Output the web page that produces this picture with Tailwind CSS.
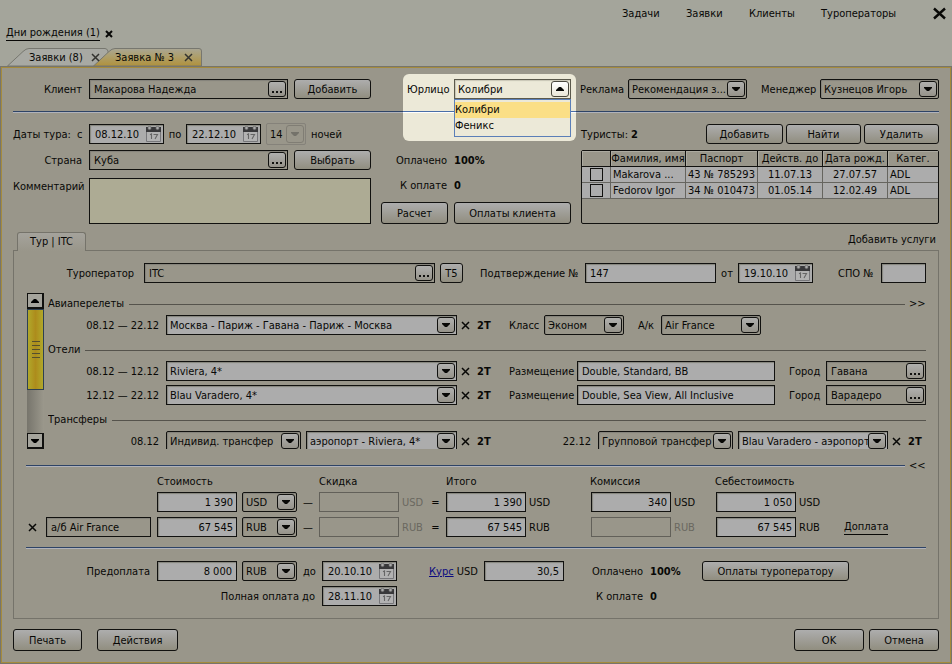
<!DOCTYPE html>
<html lang="ru">
<head>
<meta charset="utf-8">
<title>Заявка № 3</title>
<script src="https://cdn.jsdelivr.net/npm/@tailwindcss/browser@4"></script>
</head>
<body class="min-h-screen bg-[#a4a59b] font-['DejaVu_Sans_Condensed','DejaVu_Sans',sans-serif] text-[11px] leading-4 text-[#080806] whitespace-nowrap">
<svg class="hidden">
  <symbol id="down" viewBox="0 0 8 4"><path d="M0 0h8v1L5 4H3L0 1z"/></symbol>
  <symbol id="up" viewBox="0 0 8 4"><path d="M0 4h8V3L5 0H3L0 3z"/></symbol>
  <symbol id="cross" viewBox="0 0 9 9"><path d="M1 1l7 7M8 1l-7 7" fill="none" stroke="currentColor" stroke-width="1.500"/></symbol>
  <symbol id="calendar" viewBox="0 0 15 16">
    <path d="M.5 4.500v11h14v-11" fill="#b2b2b2" stroke="#77777a"/>
    <path d="M0 1h15v5H0z" fill="#38383a"/>
    <circle cx="3.500" cy="2" r="1.700" fill="#a9a9a9" stroke="#5b5b5b" stroke-width=".6"/>
    <circle cx="11.500" cy="2" r="1.700" fill="#a9a9a9" stroke="#5b5b5b" stroke-width=".6"/>
    <path d="M4 8.800l1.500-.8v5M7.500 8.500h4L9 13" fill="none" stroke="#666" stroke-width="1.100"/>
  </symbol>
</svg>
<div id="app"></div>
<script>
const label = (text, id, cls) => `<label for="${id}" class="shrink-0 pt-[2px] ${cls}">${text}</label>`;
const button = (text, cls) => `<button type="button" class="shrink-0 rounded-[3px] border border-[#11110f] bg-linear-to-b from-[#adadad] to-[#918e80] pt-px text-center ${cls}">${text}</button>`;
const input = (id, value, cls) => `<input id="${id}" value="${value}" class="block h-5 min-w-0 rounded-none border px-1 outline-none ${cls}">`;
const white = 'border-[#11110f] bg-[#acacac] shadow-[inset_1px_1px_1px_#84847c]';
const plain = 'border-[#11110f] bg-[#99968a] shadow-[inset_1px_1px_1px_#84827a]';
const off = 'border-[#626059] bg-[#99968a]';
// Text field with an ellipsis button that opens a lookup
const lookup = (id, value, cls) => `<div class="flex h-5 items-center border pl-1 pr-px ${plain} ${cls}">
  <input id="${id}" value="${value}" class="min-w-0 flex-1 bg-transparent pt-[2px] outline-none">
  <button type="button" aria-label="Выбрать из списка" class="flex h-4 w-[18px] shrink-0 items-end justify-center gap-[2px] rounded-[3px] border border-[#11110f] bg-linear-to-b from-[#b0b0ae] to-[#96938a] pb-[3px]"><i class="size-[2px] bg-[#11110f]"></i><i class="size-[2px] bg-[#11110f]"></i><i class="size-[2px] bg-[#11110f]"></i></button></div>`;
const arrow = (icon, cls) => `<span class="pointer-events-none absolute right-px top-px flex h-4 w-[18px] items-center justify-center rounded-[3px] border ${cls}"><svg class="h-[4px] w-[8px]" fill="currentColor"><use href="#${icon}"/></svg></span>`;
const dark = 'border-[#11110f] bg-linear-to-b from-[#b0b0ae] to-[#96938a]';
const select = (id, value, cls, box = plain + ' rounded-[2px]') => `<div class="relative h-5 border ${box} ${cls}">
  <select id="${id}" aria-label="${value}" class="block h-full w-full appearance-none overflow-hidden bg-transparent pl-[3px] pr-[18px] pt-[2px] outline-none"><option>${value}</option></select>${arrow('down', dark)}</div>`;
const combo = (id, value, cls) => select(id, value, cls, white);
const date = (id, value) => `<div class="flex h-5 w-[75px] shrink-0 items-center justify-between border pl-[5px] pr-[2px] ${white}">
  <input id="${id}" value="${value}" class="w-12 bg-transparent pt-[2px] outline-none"><button type="button" aria-label="Календарь"><svg class="block h-4 w-[15px]"><use href="#calendar"/></svg></button></div>`;
const cross = (cls, name = 'Удалить') => `<button type="button" aria-label="${name}" class="shrink-0 ${cls}"><svg class="block h-[9px] w-full"><use href="#cross"/></svg></button>`;
const rule = cls => `<div class="h-[2px] border-b border-t border-b-[#b0b2ba] border-t-[#2e4366] ${cls}"></div>`;
const section = (title, extra = '') => `<div class="flex h-4 items-center"><h3>${title}</h3><div class="ml-[5px] flex-1 border-t border-[#55534c]"></div>${extra}</div>`;
const tail = `${cross('ml-1 w-[9px]')}<b class="ml-[7px] w-[14px] pt-[2px]">2T</b>`;
const hotel = (k, dates, name, room, city) => `<div class="flex items-center">
  ${label(dates, 'hotel' + k, 'w-[111px] text-right')}${combo('hotel' + k, name, 'ml-[7px] w-[291px]')}${tail}
  ${label('Размещение', 'room' + k, 'ml-[18px] w-[63px]')}${input('room' + k, room, 'ml-[5px] flex-1 ' + white)}
  ${label('Город', 'city' + k, 'ml-[14px] w-[31px]')}${lookup('city' + k, city, 'ml-[6px] w-[100px]')}</div>`;
const cost = (k, cur, lead, a, total, commission, com, net, link) => `<div class="flex h-5 items-center [&>span]:pt-[2px]">
  ${lead}
  <input aria-label="Стоимость ${cur}" value="${a}" class="ml-[6px] h-5 w-20 border px-[3px] text-right ${white}">
  ${select('cur' + k, cur, 'ml-[5px] w-[55px]')}<span class="w-[22px] text-center">—</span>
  <input aria-label="Скидка ${cur}" disabled class="h-5 w-20 border ${off}"><span class="w-[26px] pl-[3px] text-[#6a6860]">${cur}</span>
  <span class="w-[21px] text-center">=</span>
  <input aria-label="Итого ${cur}" value="${total}" class="h-5 w-20 border px-[3px] text-right ${white}"><span class="w-[65px] pl-[3px]">${cur}</span>
  <input aria-label="Комиссия ${cur}" value="${commission}" class="h-5 w-20 border px-[3px] text-right ${com}"><span class="w-[45px] pl-[3px] ${commission ? '' : 'text-[#6a6860]'}">${cur}</span>
  <input aria-label="Себестоимость ${cur}" value="${net}" class="h-5 w-20 border px-[3px] text-right ${white}"><span class="w-12 pl-[3px]">${cur}</span>${link}</div>`;
const person = (name, pass, valid, born) => `<tr class="h-4 leading-[15px]">
  <td class="border-b border-r border-[#66655f] bg-[#acacac] p-0"><input type="checkbox" aria-label="${name}" class="mx-auto block size-[13px] appearance-none border border-[#11110f]"></td>
  <td class="truncate border-b border-r border-[#66655f] bg-[#acacac] pl-[2px]">${name}</td><td class="border-b border-r border-[#66655f] bg-[#acacac] text-center">${pass}</td>
  <td class="border-b border-r border-[#66655f] bg-[#acacac] text-center">${valid}</td><td class="border-b border-r border-[#66655f] bg-[#acacac] text-center">${born}</td><td class="border-b border-[#66655f] bg-[#acacac] pl-[2px]">ADL</td></tr>`;

document.getElementById('app').innerHTML = `
<div class="flex min-h-screen flex-col">
<header>
  <nav class="flex h-[26px] items-center justify-end pr-[6px] pt-px">
    <a href="#" class="w-16">Задачи</a><a href="#" class="w-[63px]">Заявки</a><a href="#" class="w-[72px]">Клиенты</a><a href="#" class="w-[112px]">Туроператоры</a>
    <button type="button" aria-label="Закрыть"><svg class="block size-[13px]" viewBox="0 0 13 13"><path d="M1 1.500l11 10M12 1.500l-11 10" fill="none" stroke="#080806" stroke-width="2.400"/></svg></button>
  </nav>
  <div class="flex h-[22px] items-start pl-[6px]"><a href="#" class="border-b border-[#080806] leading-[14px]">Дни рождения (1)</a>
    <button type="button" aria-label="Убрать" class="ml-[5px] mt-1"><svg class="block size-[8px]" viewBox="0 0 8 8"><path d="M1 1l6 6M7 1l-6 6" fill="none" stroke="#080806" stroke-width="2"/></svg></button></div>
  <div class="flex h-[18px] pl-[7px]">
    <div class="relative flex w-[86px] items-center pl-[22px] pt-px">
      <svg class="absolute left-0 top-0 h-[18px] w-[104px]" viewBox="0 0 104 18"><path d="M.5 18L16 3.500Q19 .5 22 .5H98Q100 .5 101 3V18z" fill="#a8a9a3" stroke="#77776f"/></svg>
      <a href="#" class="relative">Заявки (8)</a>${cross('absolute left-[84px] z-20 w-[9px] text-[#33332f]', 'Закрыть вкладку')}</div>
    <div class="relative z-10 flex w-[109px] items-center pl-[22px] pt-px">
      <svg class="absolute left-0 top-0 h-[18px] w-[109px]" viewBox="0 0 109 18"><defs><linearGradient id="gold" x2="0" y2="1"><stop stop-color="#a9a694"/><stop offset=".45" stop-color="#ae9f6c"/><stop offset="1" stop-color="#b0913c"/></linearGradient></defs><path d="M.5 18L16 3.500Q19 .5 22 .5H106Q108.500 .5 108.500 3V18z" fill="url(#gold)" stroke="#77776f"/></svg>
      <a href="#" class="relative">Заявка № 3</a>${cross('absolute left-[91px] w-[9px] text-[#33332f]', 'Закрыть вкладку')}</div>
  </div>
</header>
<main class="flex-1 border border-[#77756c] bg-[#99968a]">
<form class="border border-[#a58b3c] p-[11px]">
  <div class="flex items-center">
    ${label('Клиент', 'client', 'w-[69px] text-right')}${lookup('client', 'Макарова Надежда', 'ml-[7px] w-[199px]')}${button('Добавить', 'ml-[6px] h-5 w-[77px]')}
    <div class="relative z-10 ml-8 flex w-[173px] shrink-0 items-center pl-1">
      <div class="absolute inset-x-0 -top-[5px] h-[67px] rounded-[6px] bg-[#ece9d8] pt-[37px]"><div class="h-[2px] border-b border-t border-b-white border-t-[#4a6ea8]"></div></div>
      ${label('Юрлицо', 'entity', 'relative w-10')}
      <div class="relative ml-[7px] h-5 w-[117px] border border-[#5b594c] bg-[#ece9d8] shadow-[inset_1px_1px_1px_#c9c6b6]">
        <select id="entity" class="block h-full w-full appearance-none bg-transparent pl-[3px] pt-[2px] outline-none"><option>Колибри</option><option>Феникс</option></select>
        ${arrow('up', 'border-[#4a483e] bg-linear-to-b from-white to-[#eae7d8]')}
        <ul role="listbox" aria-label="Юрлицо" class="absolute -inset-x-px top-[19px] h-[38px] border border-[#5b7fb8] bg-[#ece9d8] pt-[2px]"><li role="option" aria-selected="true" class="bg-[#fbdf86]">Колибри</li><li role="option" aria-selected="false">Феникс</li></ul>
      </div>
    </div>
    ${label('Реклама', 'promo', 'ml-1 w-[42px]')}${select('promo', 'Рекомендация з...', 'ml-[6px] min-w-0 flex-1')}
    ${label('Менеджер', 'manager', 'ml-[14px] w-[53px]')}${select('manager', 'Кузнецов Игорь', 'ml-[6px] min-w-0 flex-1')}
  </div>
  ${rule('mt-3')}
  <div class="mt-[11px] flex gap-[10px]">
    <div class="w-[358px] shrink-0">
      <div class="flex h-5 items-center">${label('Даты тура: &nbsp;с', 'from', 'w-[69px] text-right')}<div class="ml-[7px]">${date('from', '08.12.10')}</div>${label('по', 'till', 'w-[22px] text-center')}${date('till', '22.12.10')}
        <div class="relative ml-[5px] h-[22px] w-10 rounded-[2px] border border-[#85827a]"><select id="nights" disabled class="block h-full w-full appearance-none pl-[3px] pt-px"><option>14</option></select><span class="absolute right-px top-px flex h-[18px] w-[18px] items-center justify-center rounded-[3px] border border-[#807d74] text-[#74726a]"><svg class="h-[4px] w-[8px]" fill="currentColor"><use href="#down"/></svg></span></div>
        ${label('ночей', 'nights', 'ml-[5px]')}</div>
      <div class="mt-[6px] flex items-center">${label('Страна', 'country', 'w-[69px] text-right')}${lookup('country', 'Куба', 'ml-[7px] w-[199px]')}${button('Выбрать', 'ml-[6px] h-5 w-[77px]')}</div>
      <div class="mt-2 flex">${label('Комментарий', 'note', 'w-[69px] -mt-px text-right')}<textarea id="note" class="ml-[7px] block h-[46px] flex-1 resize-none border border-[#11110f] bg-[#adab94]"></textarea></div>
    </div>
    <div class="w-[190px] shrink-0 pt-[26px]">
      <div class="flex h-5 items-center pt-px"><span class="w-[66px] text-right">Оплачено</span><b class="ml-[7px]">100%</b></div>
      <div class="mt-[5px] flex h-5 items-center pt-px"><span class="w-[66px] text-right">К оплате</span><b class="ml-[7px]">0</b></div>
      <div class="mt-[7px] flex gap-[6px]">${button('Расчет', 'h-[22px] w-[67px]')}${button('Оплаты клиента', 'h-[22px] w-[117px]')}</div>
    </div>
    <div class="flex min-w-0 flex-1 flex-col">
      <div class="flex h-5 items-center gap-[3px]"><span class="flex-1 pt-px">Туристы: <b>2</b></span>${button('Добавить', 'h-5 w-[77px]')}${button('Найти', 'h-5 w-[75px]')}${button('Удалить', 'h-5 w-[75px]')}</div>
      <div class="mt-[6px] flex-1 rounded-[2px] border border-[#11110f]">
        <table class="w-full table-fixed border-separate border-spacing-0">
          <colgroup><col class="w-[29px]"><col class="w-[75px]"><col class="w-[72px]"><col class="w-[65px]"><col class="w-[65px]"><col></colgroup>
          <thead><tr class="h-4 leading-[15px]">${['', 'Фамилия, имя', 'Паспорт', 'Действ. до', 'Дата рожд.', 'Катег.'].map(t => `<th class="overflow-hidden border-b border-r border-[#11110f] p-0 font-normal shadow-[inset_1px_1px_0_#acaaa0] last:border-r-0">${t}</th>`).join('')}</tr></thead>
          <tbody>${person('Makarova ...', '43 № 785293', '11.07.13', '27.07.57')}${person('Fedorov Igor', '34 № 010473', '01.05.14', '12.02.49')}</tbody>
        </table>
      </div>
    </div>
  </div>
  <div class="mt-2 flex h-[18px] items-start justify-between pl-1 pr-[3px]">
    <button type="button" class="relative h-[19px] w-[69px] rounded-t-[3px] border border-b-0 border-[#75736a] bg-linear-to-b from-[#a5a39c] to-[#99968a]">Тур | ITC</button>
    <a href="#">Добавить услуги</a>
  </div>
  <div class="border border-[#75736a] px-3 py-3">
    <div class="flex items-center">
      ${label('Туроператор', 'operator', 'w-[108px] text-right')}${lookup('operator', 'ITC', 'ml-[10px] min-w-0 flex-1')}${button('T5', 'ml-[5px] h-5 w-[23px]')}
      ${label('Подтверждение №', 'confirm', 'ml-[17px] w-[99px]')}${input('confirm', '147', 'ml-[6px] w-[131px] ' + white)}${label('от', 'confirmDate', 'w-[22px] text-center')}${date('confirmDate', '19.10.10')}
      ${label('СПО №', 'spo', 'ml-[25px] w-[37px]')}${input('spo', '', 'ml-[6px] w-[45px] ' + white)}
    </div>
    <div class="mt-[10px] flex h-[156px]">
      <div class="ml-px flex w-[17px] shrink-0 flex-col bg-linear-to-r from-[#77756c] to-[#9b988c]">
        <button type="button" aria-label="Вверх" class="flex h-4 items-center justify-center border-2 border-l border-t border-[#11110f] bg-[#a5a49c]"><svg class="h-[4px] w-[8px]"><use href="#up"/></svg></button>
        <div class="flex h-[81px] flex-col items-center justify-center gap-[3px] border border-[#2e4052] bg-linear-to-r from-[#b0a82a] via-[#ad8c1c] to-[#b0a82a]"><i class="h-px w-2 bg-[#55502e]"></i><i class="h-px w-2 bg-[#55502e]"></i><i class="h-px w-2 bg-[#55502e]"></i><i class="h-px w-2 bg-[#55502e]"></i><i class="h-px w-2 bg-[#55502e]"></i></div>
        <button type="button" aria-label="Вниз" class="mt-auto flex h-4 items-center justify-center border-2 border-l border-t border-[#11110f] bg-[#a5a49c]"><svg class="h-[4px] w-[8px]"><use href="#down"/></svg></button>
      </div>
      <div class="ml-1 flex min-w-0 flex-1 flex-col gap-[7px] overflow-hidden pt-[3px]">
        <div class="flex flex-col gap-[3px]">${section('Авиаперелеты', '<a href="#" class="ml-1 w-[17px]">&gt;&gt;</a>')}
          <div class="flex items-center">${label('08.12 — 22.12', 'flight', 'w-[111px] text-right')}${combo('flight', 'Москва - Париж - Гавана - Париж - Москва', 'ml-[7px] w-[291px]')}${tail}
            ${label('Класс', 'klass', 'ml-[18px] w-[29px]')}${select('klass', 'Эконом', 'ml-[6px] w-20')}${label('А/к', 'airline', 'ml-[14px] w-[17px]')}${select('airline', 'Air France', 'ml-[6px] w-[100px]')}</div></div>
        <div class="flex flex-col gap-[3px]">${section('Отели')}<div class="flex flex-col gap-1">
          ${hotel(1, '08.12 — 12.12', 'Riviera, 4*', 'Double, Standard, BB', 'Гавана')}
          ${hotel(2, '12.12 — 22.12', 'Blau Varadero, 4*', 'Double, Sea View, All Inclusive', 'Варадеро')}</div></div>
        <div class="flex flex-col gap-[3px]">${section('Трансферы')}
          <div class="flex items-center">${label('08.12', 'tr1', 'w-[111px] text-right')}${select('tr1', 'Индивид. трансфер', 'ml-[7px] w-[135px]')}<div class="ml-[5px] w-[151px]">${combo('way1', 'аэропорт - Riviera, 4*', 'w-full')}</div>${tail}
            <div class="ml-auto flex items-center pr-1">${label('22.12', 'tr2', '')}${select('tr2', 'Групповой трансфер', 'ml-[7px] w-[135px]')}${combo('way2', 'Blau Varadero - аэропорт', 'ml-[5px] w-[150px]')}${tail}</div></div></div>
      </div>
    </div>
    <div class="mt-[9px] flex h-4 items-center">${rule('flex-1')}<a href="#" class="ml-1 w-[17px]">&lt;&lt;</a></div>
    <div class="flex pl-[131px]"><span class="w-[162px]">Стоимость</span><span class="w-[127px]">Скидка</span><span class="w-[144px]">Итого</span><span class="w-[125px]">Комиссия</span><span>Себестоимость</span></div>
    <div class="mt-[2px] flex flex-col gap-[5px]">
      ${cost(1, 'USD', '<span class="w-[125px]"></span>', '1 390', '1 390', '340', white, '1 050', '')}
      ${cost(2, 'RUB', cross('ml-[2px] w-[9px]') + '<input aria-label="Позиция" value="а/б Air France" class="ml-[9px] h-5 w-[105px] border px-1 ' + plain + '">', '67 545', '67 545', '', off, '67 545', '<a href="#" class="border-b border-[#080806] leading-[14px]">Доплата</a>')}
    </div>
    ${rule('mt-[10px]')}
    <div class="mt-3 flex items-center">
      ${label('Предоплата', 'prepay', 'w-[124px] text-right')}${input('prepay', '8 000', 'ml-[7px] w-20 text-right ' + white)}${select('prepayCur', 'RUB', 'ml-[5px] w-[55px]')}${label('до', 'prepayDate', 'ml-[6px] w-[12px]')}<div class="ml-[7px]">${date('prepayDate', '20.10.10')}</div>
      <span class="ml-8 w-[48px] pt-px"><a href="#" class="text-[#0a0a80] underline">Курс</a> USD</span><input aria-label="Курс USD" value="30,5" class="ml-[7px] h-5 w-20 border px-1 text-right ${white}">
      <span class="w-[79px] pt-px text-right">Оплачено</span><b class="ml-[7px] w-[52px] pt-px">100%</b>${button('Оплаты туроператору', 'h-5 w-[147px]')}
    </div>
    <div class="mt-[5px] flex items-center">${label('Полная оплата до', 'fullDate', 'w-[289px] text-right')}<div class="ml-[7px]">${date('fullDate', '28.11.10')}</div><span class="w-[246px] pt-px text-right">К оплате</span><b class="ml-[7px] pt-px">0</b></div>
  </div>
  <div class="mt-[10px] flex">${button('Печать', 'h-[22px] w-[69px]')}${button('Действия', 'ml-[15px] h-[22px] w-[81px]')}${button('OK', 'ml-auto h-[22px] w-[70px]')}${button('Отмена', 'ml-[5px] h-[22px] w-[70px]')}</div>
</form>
</main>
</div>`;
</script>
</body>
</html>
